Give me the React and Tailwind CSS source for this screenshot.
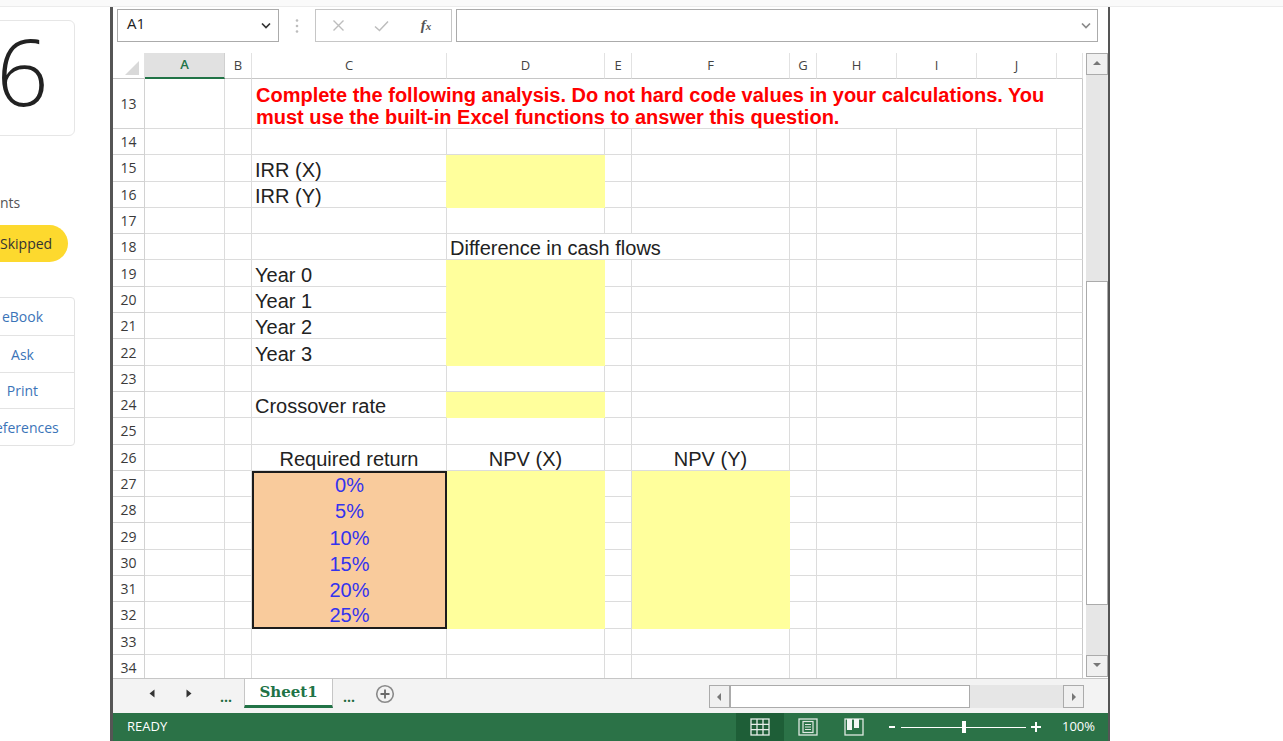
import React from 'react';

const SANS = { fontFamily: '"Open Sans", "Noto Sans", sans-serif' };
const ARIAL = { fontFamily: '"Liberation Sans", Arial, sans-serif' };

const rows = [
  { n: 14 },
  { n: 15, c: 'IRR (X)', dY: true },
  { n: 16, c: 'IRR (Y)', dY: true },
  { n: 17 },
  { n: 18, de: 'Difference in cash flows' },
  { n: 19, c: 'Year 0', dY: true },
  { n: 20, c: 'Year 1', dY: true },
  { n: 21, c: 'Year 2', dY: true },
  { n: 22, c: 'Year 3', dY: true },
  { n: 23 },
  { n: 24, c: 'Crossover rate', dY: true },
  { n: 25 },
  { n: 26, cC: 'Required return', dC: 'NPV (X)', fC: 'NPV (Y)' },
  { n: 27, pct: '0%', dY: true, fY: true, first: true },
  { n: 28, pct: '5%', dY: true, fY: true },
  { n: 29, pct: '10%', dY: true, fY: true },
  { n: 30, pct: '15%', dY: true, fY: true },
  { n: 31, pct: '20%', dY: true, fY: true },
  { n: 32, pct: '25%', dY: true, fY: true, last: true },
  { n: 33 },
  { n: 34 },
];

const base = 'shrink-0 h-full border-r border-b border-[#dcdcdc]';
const yellow = 'shrink-0 h-full bg-[#ffff9c] border-r border-b border-[#ffff9c]';

function RowHead({ n }) {
  return (
    <div
      className="w-[32px] shrink-0 h-full border-r border-b border-[#d2d2d2] flex items-center justify-center text-[14px] text-[#3a3a3a]"
      style={SANS}
    >
      {n}
    </div>
  );
}

function Row({ r }) {
  let cCell;
  if (r.pct) {
    cCell = (
      <div
        className={
          'w-[195px] shrink-0 h-full bg-[#f9cb9c] border-x-2 border-[#1c1c1c] flex items-end justify-center text-[20px] leading-[23px] text-[#3333ee]' +
          (r.first ? ' border-t-2' : '') +
          (r.last ? ' border-b-2' : '')
        }
        style={ARIAL}
      >
        {r.pct}
      </div>
    );
  } else if (r.cC) {
    cCell = (
      <div className={'w-[195px] flex items-end justify-center text-[20px] leading-[22px] text-[#222] whitespace-nowrap ' + base} style={ARIAL}>
        {r.cC}
      </div>
    );
  } else if (r.c) {
    cCell = (
      <div
        className={'w-[195px] flex items-end pl-[3px] text-[20px] leading-[22px] text-[#222] whitespace-nowrap ' + base + (r.dY ? ' border-r-[#ffff9c]' : '')}
        style={ARIAL}
      >
        {r.c}
      </div>
    );
  } else {
    cCell = <div className={'w-[195px] ' + base} />;
  }

  let dCell;
  if (r.de) {
    dCell = (
      <div
        className="w-[185px] shrink-0 h-full border-b border-[#dcdcdc] flex items-end pl-[3px] text-[20px] leading-[22px] text-[#222] whitespace-nowrap overflow-visible"
        style={ARIAL}
      >
        {r.de}
      </div>
    );
  } else if (r.dY) {
    dCell = <div className={'w-[158px] ' + yellow} />;
  } else if (r.dC) {
    dCell = (
      <div className={'w-[158px] flex items-end justify-center text-[20px] leading-[22px] text-[#222] whitespace-nowrap ' + base} style={ARIAL}>
        {r.dC}
      </div>
    );
  } else {
    dCell = <div className={'w-[158px] ' + base} />;
  }

  let fCell;
  if (r.fY) {
    fCell = <div className={'w-[158px] ' + yellow} />;
  } else if (r.fC) {
    fCell = (
      <div className={'w-[158px] flex items-end justify-center text-[20px] leading-[22px] text-[#222] whitespace-nowrap ' + base} style={ARIAL}>
        {r.fC}
      </div>
    );
  } else {
    fCell = <div className={'w-[158px] ' + base} />;
  }

  return (
    <div className="flex h-[26.3px] shrink-0">
      <RowHead n={r.n} />
      <div className={'w-[80px] ' + base} />
      <div className={'w-[27px] ' + base} />
      {cCell}
      {dCell}
      {!r.de && <div className={'w-[27px] ' + base} />}
      {fCell}
      <div className={'w-[27px] ' + base} />
      <div className={'w-[80px] ' + base} />
      <div className={'w-[80px] ' + base} />
      <div className={'w-[80px] ' + base} />
      <div className="w-[26px] shrink-0 h-full border-r border-b border-[#dcdcdc] border-r-[#c8c8c8]" />
    </div>
  );
}

function HeadCell({ w, children }) {
  return (
    <div
      className={w + ' shrink-0 h-full border-r border-b border-[#e2e2e2] border-b-[#c6c6c6] flex items-center justify-center text-[13px] text-[#444]'}
      style={SANS}
    >
      {children}
    </div>
  );
}

function Chevron({ color }) {
  return (
    <svg width="10" height="7" viewBox="0 0 10 7">
      <polyline points="1,1.5 5,5.5 9,1.5" fill="none" stroke={color} strokeWidth="1.7" />
    </svg>
  );
}

function ScrollBtn({ dir }) {
  const pts = {
    up: '1,6 5,2 9,6',
    down: '1,2 5,6 9,2',
    left: '6,1 2,5 6,9',
    right: '3,1 7,5 3,9',
  }[dir];
  return (
    <div className="w-full h-full bg-[#f0f0f0] border border-[#ababab] flex items-center justify-center">
      <svg width="10" height="10" viewBox="0 0 10 10">
        <polygon points={pts} fill="#777" />
      </svg>
    </div>
  );
}

export default function App() {
  return (
    <div className="w-[1283px] h-[741px] bg-white overflow-hidden flex flex-col" style={SANS}>
      <div className="h-[7px] shrink-0 bg-[#fafafa] border-b border-[#ececec]" />
      <div className="flex flex-1 min-h-0">
        {/* left panel */}
        <div className="w-[110px] shrink-0">
          <div className="-ml-[30px] w-[105px] flex flex-col">
            <div className="mt-[13px] h-[116px] border border-[#e6e6e6] rounded-[6px] flex items-center justify-center">
              <span className="text-[92px] font-light leading-none text-[#222] -mt-[14px]" style={SANS}>6</span>
            </div>
            <div className="mt-[57px] h-[20px] pl-[30px] text-[14px] leading-[20px] text-[#555]">nts</div>
            <div className="mt-[12px] ml-[12px] w-[86px] h-[37px] rounded-full bg-[#fdd92e] flex items-center pl-[18px] text-[14px] text-[#333]">
              Skipped
            </div>
            <div className="mt-[35px] w-[105px] border border-[#e3e3e3] rounded-[4px] flex flex-col text-[14px] text-[#3b74b8]">
              <div className="h-[38px] flex items-center justify-center border-b border-[#e3e3e3]">eBook</div>
              <div className="h-[37px] flex items-center justify-center border-b border-[#e3e3e3]">Ask</div>
              <div className="h-[36px] flex items-center justify-center border-b border-[#e3e3e3]">Print</div>
              <div className="h-[36px] flex items-center justify-center whitespace-nowrap">References</div>
            </div>
          </div>
        </div>

        {/* Excel frame */}
        <div className="w-[1000px] shrink-0 border-l-[3px] border-r-[2px] border-[#555] flex flex-col bg-white">
          {/* formula bar */}
          <div className="flex items-stretch pt-[2px] h-[35px] shrink-0">
            <div className="ml-[4px] w-[162px] h-[33px] border border-[#ababab] flex items-center justify-between pl-[9px] pr-[7px]">
              <span className="text-[15px] text-[#222] -mt-[4px]" style={SANS}>A1</span>
              <Chevron color="#333" />
            </div>
            <div className="w-[36px] h-[33px] flex items-center justify-center">
              <svg width="4" height="16" viewBox="0 0 4 16">
                <circle cx="2" cy="2.5" r="1.3" fill="#bdbdbd" />
                <circle cx="2" cy="8" r="1.3" fill="#bdbdbd" />
                <circle cx="2" cy="13.5" r="1.3" fill="#bdbdbd" />
              </svg>
            </div>
            <div className="w-[137px] h-[33px] border border-[#c6c6c6] flex items-center">
              <div className="w-[45px] flex justify-center">
                <svg width="13" height="13" viewBox="0 0 13 13">
                  <path d="M1.5 1.5 L11.5 11.5 M11.5 1.5 L1.5 11.5" stroke="#bdbdbd" strokeWidth="1.4" />
                </svg>
              </div>
              <div className="w-[40px] flex justify-center">
                <svg width="15" height="12" viewBox="0 0 15 12">
                  <polyline points="1,6.5 5.5,10.5 14,1.5" fill="none" stroke="#bdbdbd" strokeWidth="1.5" />
                </svg>
              </div>
              <div className="w-[50px] flex justify-center">
                <span className="italic font-bold text-[15px] text-[#555] leading-none" style={{ fontFamily: '"Liberation Serif", serif' }}>
                  f<span className="text-[11px]">x</span>
                </span>
              </div>
            </div>
            <div className="ml-[4px] w-[642px] h-[33px] border border-[#ababab] flex items-center justify-end pr-[6px]">
              <Chevron color="#8a8a8a" />
            </div>
          </div>

          {/* grid + vertical scrollbar */}
          <div className="mt-[11px] h-[625px] shrink-0 flex">
            <div className="w-[970px] shrink-0 h-full overflow-hidden flex flex-col">
              {/* column header */}
              <div className="flex h-[26px] shrink-0">
                <div className="w-[32px] shrink-0 h-full border-r border-b border-[#e2e2e2] border-b-[#c6c6c6]">
                  <svg width="31" height="25" viewBox="0 0 31 25">
                    <polygon points="26,8 26,22 12,22" fill="#d9d9d9" />
                  </svg>
                </div>
                <div
                  className="w-[80px] shrink-0 h-full bg-[#e1e1e1] border-r border-[#d0d0d0] border-b-2 border-b-[#217346] flex items-center justify-center text-[13px] font-semibold text-[#217346]"
                  style={SANS}
                >
                  A
                </div>
                <HeadCell w="w-[27px]">B</HeadCell>
                <HeadCell w="w-[195px]">C</HeadCell>
                <HeadCell w="w-[158px]">D</HeadCell>
                <HeadCell w="w-[27px]">E</HeadCell>
                <HeadCell w="w-[158px]">F</HeadCell>
                <HeadCell w="w-[27px]">G</HeadCell>
                <HeadCell w="w-[80px]">H</HeadCell>
                <HeadCell w="w-[80px]">I</HeadCell>
                <HeadCell w="w-[80px]">J</HeadCell>
                <HeadCell w="w-[26px]"></HeadCell>
              </div>

              {/* row 13 */}
              <div className="flex h-[50px] shrink-0">
                <RowHead n={13} />
                <div className={'w-[80px] ' + base} />
                <div className={'w-[27px] ' + base} />
                <div className={'w-[831px] flex items-end pl-[4px] ' + base + ' border-r-[#c8c8c8]'}>
                  <div className="text-[20px] font-bold leading-[22px] text-[#ff0000] whitespace-nowrap" style={ARIAL}>
                    Complete the following analysis. Do not hard code values in your calculations. You
                    <br />
                    must use the built-in Excel functions to answer this question.
                  </div>
                </div>
              </div>

              {rows.map((r) => (
                <Row key={r.n} r={r} />
              ))}
            </div>

            {/* vertical scrollbar */}
            <div className="ml-[3px] w-[22px] shrink-0 h-full flex flex-col">
              <div className="h-[22px] shrink-0">
                <ScrollBtn dir="up" />
              </div>
              <div className="h-[206px] shrink-0 bg-[#e6e6e6]" />
              <div className="h-[324px] shrink-0 bg-white border border-[#ababab]" />
              <div className="h-[50px] shrink-0 bg-[#e6e6e6]" />
              <div className="h-[22px] shrink-0">
                <ScrollBtn dir="down" />
              </div>
            </div>
          </div>

          {/* sheet tabs bar */}
          <div className="h-[35px] shrink-0 bg-[#f3f3f3] border-t border-[#c6c6c6] flex items-start">
            <div className="w-[34px] shrink-0" />
            <div className="w-[10px] h-[29px] shrink-0 flex items-center justify-center">
              <svg width="6" height="9" viewBox="0 0 6 9">
                <polygon points="5.5,0.5 0.5,4.5 5.5,8.5" fill="#333" />
              </svg>
            </div>
            <div className="w-[27px] shrink-0" />
            <div className="w-[10px] h-[29px] shrink-0 flex items-center justify-center">
              <svg width="6" height="9" viewBox="0 0 6 9">
                <polygon points="0.5,0.5 5.5,4.5 0.5,8.5" fill="#333" />
              </svg>
            </div>
            <div className="w-[50px] h-[29px] shrink-0 flex items-end justify-center pl-[14px] pb-[4px] text-[14px] font-bold leading-none text-[#1f6b40]">
              ...
            </div>
            <div
              className="w-[89px] h-[29px] shrink-0 bg-white border-x border-[#c6c6c6] border-b-[3px] border-b-[#217346] flex items-center justify-center text-[15px] font-bold text-[#217346]"
              style={{ fontFamily: '"DejaVu Serif", "Liberation Serif", serif' }}
            >
              Sheet1
            </div>
            <div className="w-[32px] h-[29px] shrink-0 flex items-end justify-center pb-[4px] text-[14px] font-bold leading-none text-[#1f6b40]">
              ...
            </div>
            <div className="w-[40px] h-[29px] shrink-0 flex items-center justify-center">
              <svg width="20" height="20" viewBox="0 0 20 20">
                <circle cx="10" cy="10" r="8.3" fill="none" stroke="#8a8a8a" strokeWidth="1.6" />
                <path d="M10 5.5 V14.5 M5.5 10 H14.5" stroke="#6a6a6a" strokeWidth="1.8" />
              </svg>
            </div>
            <div className="w-[304px] shrink-0" />
            <div className="mt-[6px] h-[23px] w-[375px] shrink-0 flex">
              <div className="w-[21px] h-full shrink-0">
                <ScrollBtn dir="left" />
              </div>
              <div className="w-[240px] h-full shrink-0 bg-white border border-[#ababab]" />
              <div className="w-[93px] h-full shrink-0 bg-[#e6e6e6]" />
              <div className="w-[21px] h-full shrink-0">
                <ScrollBtn dir="right" />
              </div>
            </div>
          </div>

          {/* status bar */}
          <div className="h-[28px] shrink-0 bg-[#2b7247] flex items-stretch text-white">
            <div className="w-[623px] shrink-0 flex items-center pl-[14px] text-[13px]" style={SANS}>
              READY
            </div>
            <div className="w-[48px] shrink-0 bg-[#1e5e37] flex items-center justify-center">
              <svg width="20" height="18" viewBox="0 0 20 18">
                <rect x="1" y="1" width="18" height="16" fill="none" stroke="#e6efe9" strokeWidth="1.3" />
                <path d="M7 1 V17 M13 1 V17 M1 6.3 H19 M1 11.6 H19" stroke="#e6efe9" strokeWidth="1.3" />
              </svg>
            </div>
            <div className="w-[48px] shrink-0 flex items-center justify-center">
              <svg width="20" height="18" viewBox="0 0 20 18">
                <rect x="1" y="1" width="18" height="16" fill="none" stroke="#dfe9e2" strokeWidth="1.3" />
                <rect x="5" y="3.5" width="10" height="11" fill="none" stroke="#dfe9e2" strokeWidth="1.2" />
                <path d="M7 6.5 H13 M7 9 H13 M7 11.5 H13" stroke="#dfe9e2" strokeWidth="1" />
              </svg>
            </div>
            <div className="w-[44px] shrink-0 flex items-center justify-center">
              <svg width="20" height="18" viewBox="0 0 20 18">
                <rect x="1" y="1" width="18" height="16" fill="none" stroke="#dfe9e2" strokeWidth="1.3" />
                <rect x="3" y="1" width="5" height="11" fill="#f2f7f4" />
                <rect x="10" y="1" width="5" height="9" fill="#f2f7f4" />
              </svg>
            </div>
            <div className="ml-[13px] w-[6px] shrink-0 flex items-center">
              <div className="w-[6px] h-[2px] bg-white" />
            </div>
            <div className="ml-[6px] w-[125px] shrink-0 flex items-center">
              <div className="w-[61px] h-[1px] bg-white" />
              <div className="w-[4px] h-[12px] bg-white" />
              <div className="w-[60px] h-[1px] bg-white" />
            </div>
            <div className="ml-[5px] w-[10px] shrink-0 flex items-center justify-center">
              <svg width="10" height="10" viewBox="0 0 10 10">
                <path d="M5 0 V10 M0 5 H10" stroke="#fff" strokeWidth="2" />
              </svg>
            </div>
            <div className="ml-[21px] flex items-center text-[13px]" style={SANS}>
              100%
            </div>
          </div>
        </div>
        <div className="flex-1" />
      </div>
    </div>
  );
}
